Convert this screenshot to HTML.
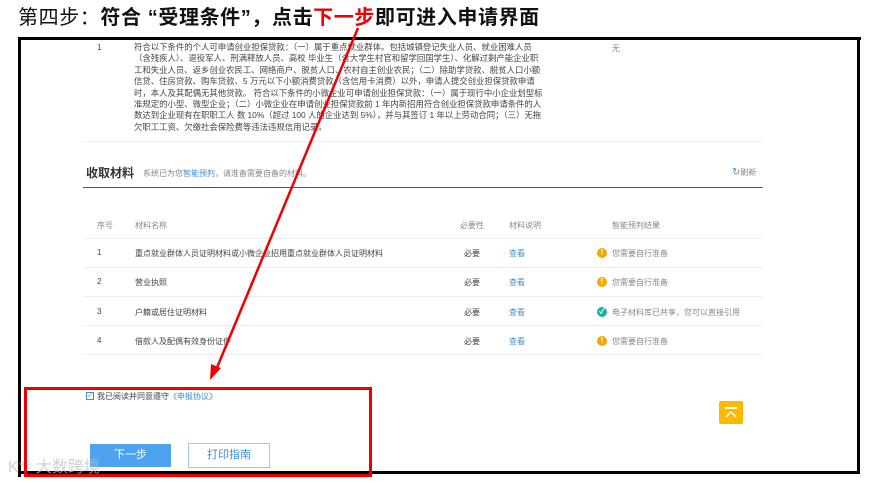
<!DOCTYPE html>
<html><head><meta charset="utf-8"><style>
*{margin:0;padding:0;box-sizing:border-box}
body{width:876px;height:483px;background:#fff;position:relative;overflow:hidden;font-family:"Liberation Sans","Noto Sans CJK SC",sans-serif;color:#333}
.a{position:absolute;white-space:nowrap}
.s{font-size:8px;color:#444}
.g{color:#888}
.b{color:#3a8fd9}
.ln{position:absolute;height:1px;background:#eee;left:83px;width:680px}
.ic{position:absolute;width:10px;height:10px;border-radius:50%;background:#f6a700;color:#fff;font-size:8px;font-weight:bold;text-align:center;line-height:10px}
</style></head><body>
<div class="a" style="left:18px;top:1px;font-size:20px;color:#111;letter-spacing:0.6px"><span style="font-weight:normal">第四步：</span><b>符合 “受理条件”，点击<span style="color:#e00">下一步</span>即可进入申请界面</b></div>
<div class="a" style="left:18px;top:37px;width:843px;height:3px;background:#000"></div>
<div class="a" style="left:18px;top:37px;width:3px;height:440px;background:#000"></div>
<div class="a" style="left:857px;top:37px;width:3px;height:437px;background:#000"></div>
<div class="a" style="left:18px;top:471px;width:842px;height:3px;background:#000"></div>

<div class="a s" style="left:97px;top:43px;font-size:8px">1</div>
<div class="a s" style="left:134px;top:42px;line-height:11.4px;white-space:normal;width:410px;font-size:8.4px">符合以下条件的个人可申请创业担保贷款：（一）属于重点就业群体。包括城镇登记失业人员、就业困难人员（含残疾人）、退役军人、刑满释放人员、高校 毕业生（含大学生村官和留学回国学生）、化解过剩产能企业职工和失业人员、返乡创业农民工、网络商户、脱贫人口、农村自主创业农民；（二）除助学贷款、脱贫人口小额信贷、住房贷款、购车贷款、5 万元以下小额消费贷款（含信用卡消费）以外，申请人提交创业担保贷款申请时，本人及其配偶无其他贷款。 符合以下条件的小微企业可申请创业担保贷款：（一）属于现行中小企业划型标准规定的小型、微型企业；（二）小微企业在申请创业担保贷款前 1 年内新招用符合创业担保贷款申请条件的人数达到企业现有在职职工人 数 10%（超过 100 人的企业达到 5%），并与其签订 1 年以上劳动合同；（三）无拖欠职工工资、欠缴社会保险费等违法违规信用记录。</div>
<div class="a s g" style="left:612px;top:43px">无</div>
<div class="ln" style="top:141px"></div>

<div class="a" style="left:86px;top:164px;font-size:12px;font-weight:bold;color:#333">收取材料</div>
<div class="a s g" style="left:143px;top:168px">系统已为您<span class="b">智能预判</span>，请准备需要自备的材料。</div>
<div class="a s g" style="left:732px;top:167px"><span class="b" style="font-size:10px">↻</span>刷新</div>
<div class="a" style="left:83px;top:187px;width:680px;height:1px;background:#555"></div>

<div class="a s g" style="left:97px;top:220px">序号</div>
<div class="a s g" style="left:135px;top:220px">材料名称</div>
<div class="a s g" style="left:460px;top:220px">必要性</div>
<div class="a s g" style="left:509px;top:220px">材料说明</div>
<div class="a s g" style="left:612px;top:220px">智能预判结果</div>
<div class="ln" style="top:238px"></div>

<div class="a s" style="left:97px;top:248px">1</div><div class="a s" style="left:135px;top:248px">重点就业群体人员证明材料或小微企业招用重点就业群体人员证明材料</div><div class="a s" style="left:464px;top:248px">必要</div><div class="a s b" style="left:509px;top:248px">查看</div><div class="ic" style="left:597px;top:248px">!</div><div class="a s g" style="left:612px;top:248px">您需要自行准备</div>
<div class="ln" style="top:267px"></div>
<div class="a s" style="left:97px;top:277px">2</div><div class="a s" style="left:135px;top:277px">营业执照</div><div class="a s" style="left:464px;top:277px">必要</div><div class="a s b" style="left:509px;top:277px">查看</div><div class="ic" style="left:597px;top:277px">!</div><div class="a s g" style="left:612px;top:277px">您需要自行准备</div>
<div class="ln" style="top:296px"></div>
<div class="a s" style="left:97px;top:307px">3</div><div class="a s" style="left:135px;top:307px">户籍或居住证明材料</div><div class="a s" style="left:464px;top:307px">必要</div><div class="a s b" style="left:509px;top:307px">查看</div><div class="ic" style="left:597px;top:307px;background:#16b3a0">✓</div><div class="a s g" style="left:612px;top:307px">电子材料库已共享，您可以直接引用</div>
<div class="ln" style="top:325px"></div>
<div class="a s" style="left:97px;top:336px">4</div><div class="a s" style="left:135px;top:336px">借款人及配偶有效身份证件</div><div class="a s" style="left:464px;top:336px">必要</div><div class="a s b" style="left:509px;top:336px">查看</div><div class="ic" style="left:597px;top:336px">!</div><div class="a s g" style="left:612px;top:336px">您需要自行准备</div>
<div class="ln" style="top:354px"></div>

<div class="a" style="left:86px;top:392px;width:8px;height:8px;border:1px solid #3a8fd9;font-size:6px;color:#3a8fd9;line-height:6px;text-align:center">✓</div>
<div class="a s" style="left:97px;top:391px">我已阅读并同意遵守<span class="b">《申报协议》</span></div>
<div class="a" style="left:90px;top:444px;width:81px;height:23px;background:#4da3ef;color:#fff;font-size:11px;text-align:center;line-height:23px">下一步</div>
<div class="a" style="left:188px;top:443px;width:82px;height:25px;border:1px solid #9cc7ee;color:#3a8fd9;font-size:11px;text-align:center;line-height:23px">打印指南</div>
<div class="a" style="left:719px;top:401px;width:24px;height:23px;background:#fdb900;border-radius:2px"><div style="position:absolute;left:6px;top:6px;width:12px;height:1.5px;background:#fff"></div><svg width="24" height="23" style="position:absolute;left:0;top:0"><path d="M7 16 L12 11 L17 16" stroke="#fff" stroke-width="1.5" fill="none"/></svg></div>
<div class="a" style="left:8px;top:453px;font-size:16px;color:rgba(190,190,190,.7)">K°° 大数跨境</div>
<div class="a" style="left:24px;top:387px;width:348px;height:90px;border:3px solid #e00"></div>
<svg class="a" style="left:0;top:0" width="876" height="483"><line x1="358" y1="28" x2="216" y2="370" stroke="#e00" stroke-width="2.5"/><path d="M210 380 L211 364 L221 368 Z" fill="#e00"/></svg>
</body></html>
